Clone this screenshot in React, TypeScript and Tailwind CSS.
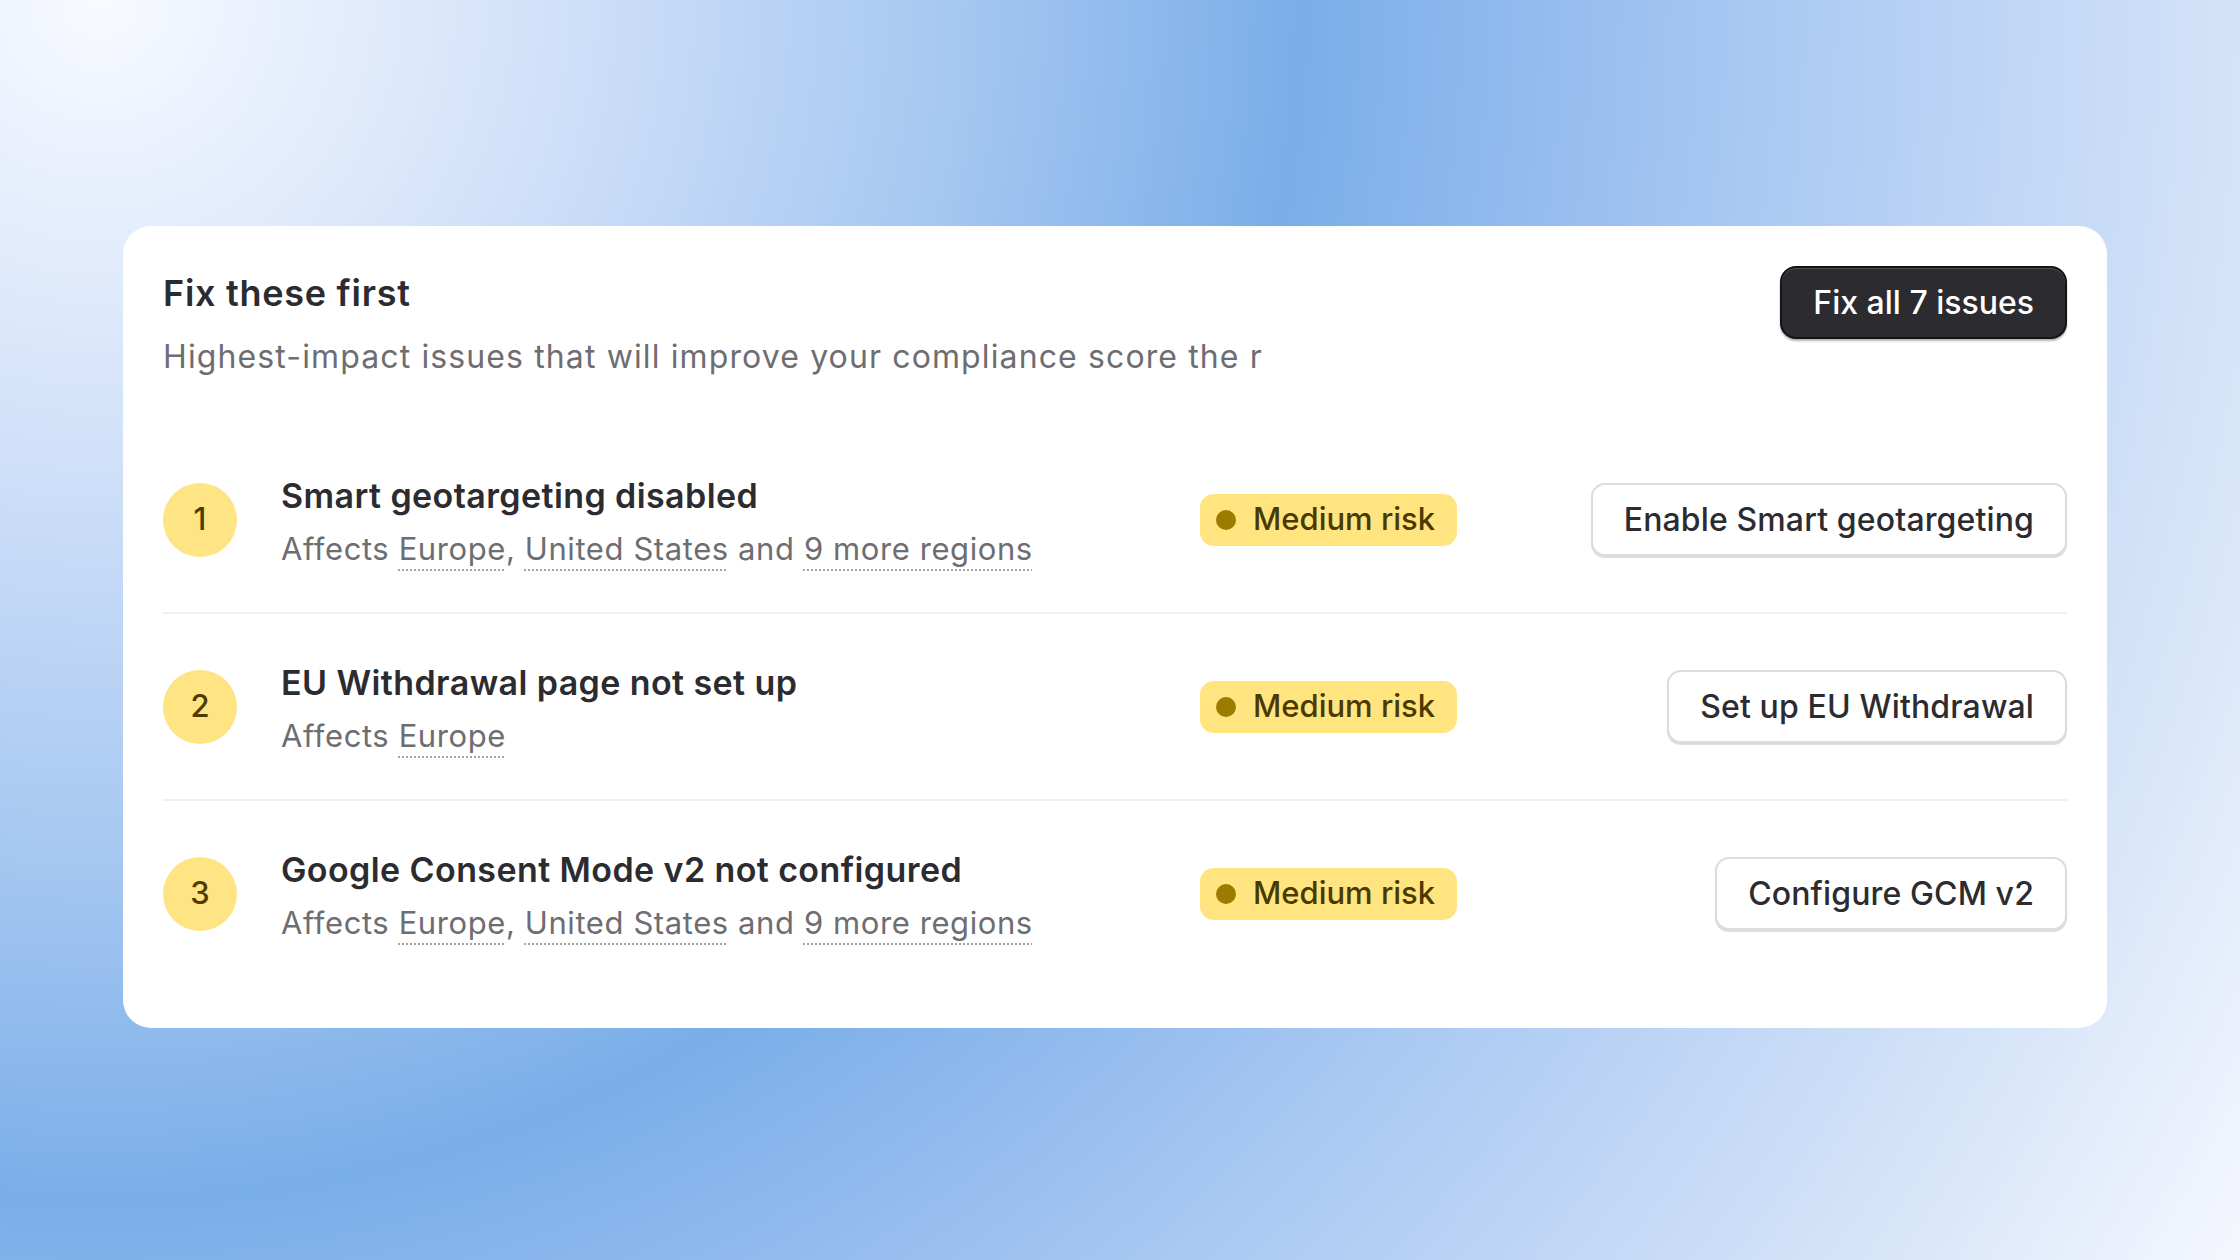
const issues = [
  {
    n: 1,
    title: 'Smart geotargeting disabled',
    regions: ['Europe', 'United States'],
    more: '9 more regions',
    action: 'Enable Smart geotargeting',
  },
  {
    n: 2,
    title: 'EU Withdrawal page not set up',
    regions: ['Europe'],
    more: null,
    action: 'Set up EU Withdrawal',
  },
  {
    n: 3,
    title: 'Google Consent Mode v2 not configured',
    regions: ['Europe', 'United States'],
    more: '9 more regions',
    action: 'Configure GCM v2',
  },
]

const Link = ({ children }: { children: React.ReactNode }) => (
  <span className="underline decoration-dotted decoration-[#a3a3a8] decoration-2 underline-offset-[9px]">
    {children}
  </span>
)

const IssueRow = ({ issue }: { issue: (typeof issues)[number] }) => (
  <div className="flex items-center py-[43px] border-b-2 border-[#f0f0f3] last:border-b-0">
    <div className="w-[74px] h-[74px] shrink-0 rounded-full bg-[#fee483] flex items-center justify-center text-[31px] font-medium text-[#4d3c00]">
      {issue.n}
    </div>
    <div className="ml-[44px] w-[919px] pt-[6px] flex flex-col">
      <span className="text-[34px] leading-[40px] font-semibold tracking-[0.012em] text-[#2c2c30]">{issue.title}</span>
      <span className="mt-[13px] text-[31px] leading-[40px] tracking-[0.019em] text-[#6d6d72]">
        Affects <Link>{issue.regions[0]}</Link>
        {issue.regions[1] && (
          <>
            , <Link>{issue.regions[1]}</Link>
          </>
        )}
        {issue.more && (
          <>
            {' '}and <Link>{issue.more}</Link>
          </>
        )}
      </span>
    </div>
    <div className="h-[52px] w-[257px] shrink-0 rounded-[14px] bg-[#ffe47f] flex items-center pl-[16px] gap-[17px] text-[31px] font-medium text-[#4a3a00]">
      <span className="w-[20px] h-[20px] rounded-full bg-[#9b7c00]" />
      Medium risk
    </div>
    <div className="flex-1 flex justify-end">
      <button className="h-[73px] px-[31px] rounded-[14px] bg-white border-2 border-[#dcdcdf] shadow-[0_2px_1px_rgba(0,0,0,0.14)] text-[32px] font-medium tracking-[0.004em] text-[#2c2c30] whitespace-nowrap">
        {issue.action}
      </button>
    </div>
  </div>
)

export default function App() {
  return (
    <div
      className="w-[2240px] h-[1260px] pt-[226px] pl-[123px] bg-[radial-gradient(circle_at_100px_0px,#f8faff_0px,#d3e2f9_430px,#a9c9f2_830px,#7aaee8_1200px,#a6c6f2_1620px,#d2e2f8_2120px,#f5f7fe_2480px)]"
      style={{ fontFamily: 'Inter, "Noto Sans", sans-serif' }}
    >
      <div className="w-[1984px] bg-white rounded-[28px] px-[40px] pt-[40px] pb-[42px]">
        <div className="flex justify-between items-start">
          <div className="flex flex-col pt-[7px]">
            <h1 className="text-[36px] leading-[40px] font-semibold tracking-[0.02em] text-[#2c2c30]">Fix these first</h1>
            <p className="mt-[24px] text-[32px] leading-[40px] tracking-[0.035em] text-[#6d6d72] whitespace-nowrap">
              Highest-impact issues that will improve your compliance score the r
            </p>
          </div>
          <button className="h-[73px] px-[31px] rounded-[16px] bg-[#2c2c30] border-2 border-[#141416] shadow-[inset_0_1px_0_rgba(255,255,255,0.18),0_2px_2px_rgba(0,0,0,0.3)] text-[32px] font-medium text-white whitespace-nowrap">
            Fix all 7 issues
          </button>
        </div>
        <div className="mt-[50px] flex flex-col">
          {issues.map((issue) => (
            <IssueRow key={issue.n} issue={issue} />
          ))}
        </div>
      </div>
    </div>
  )
}
